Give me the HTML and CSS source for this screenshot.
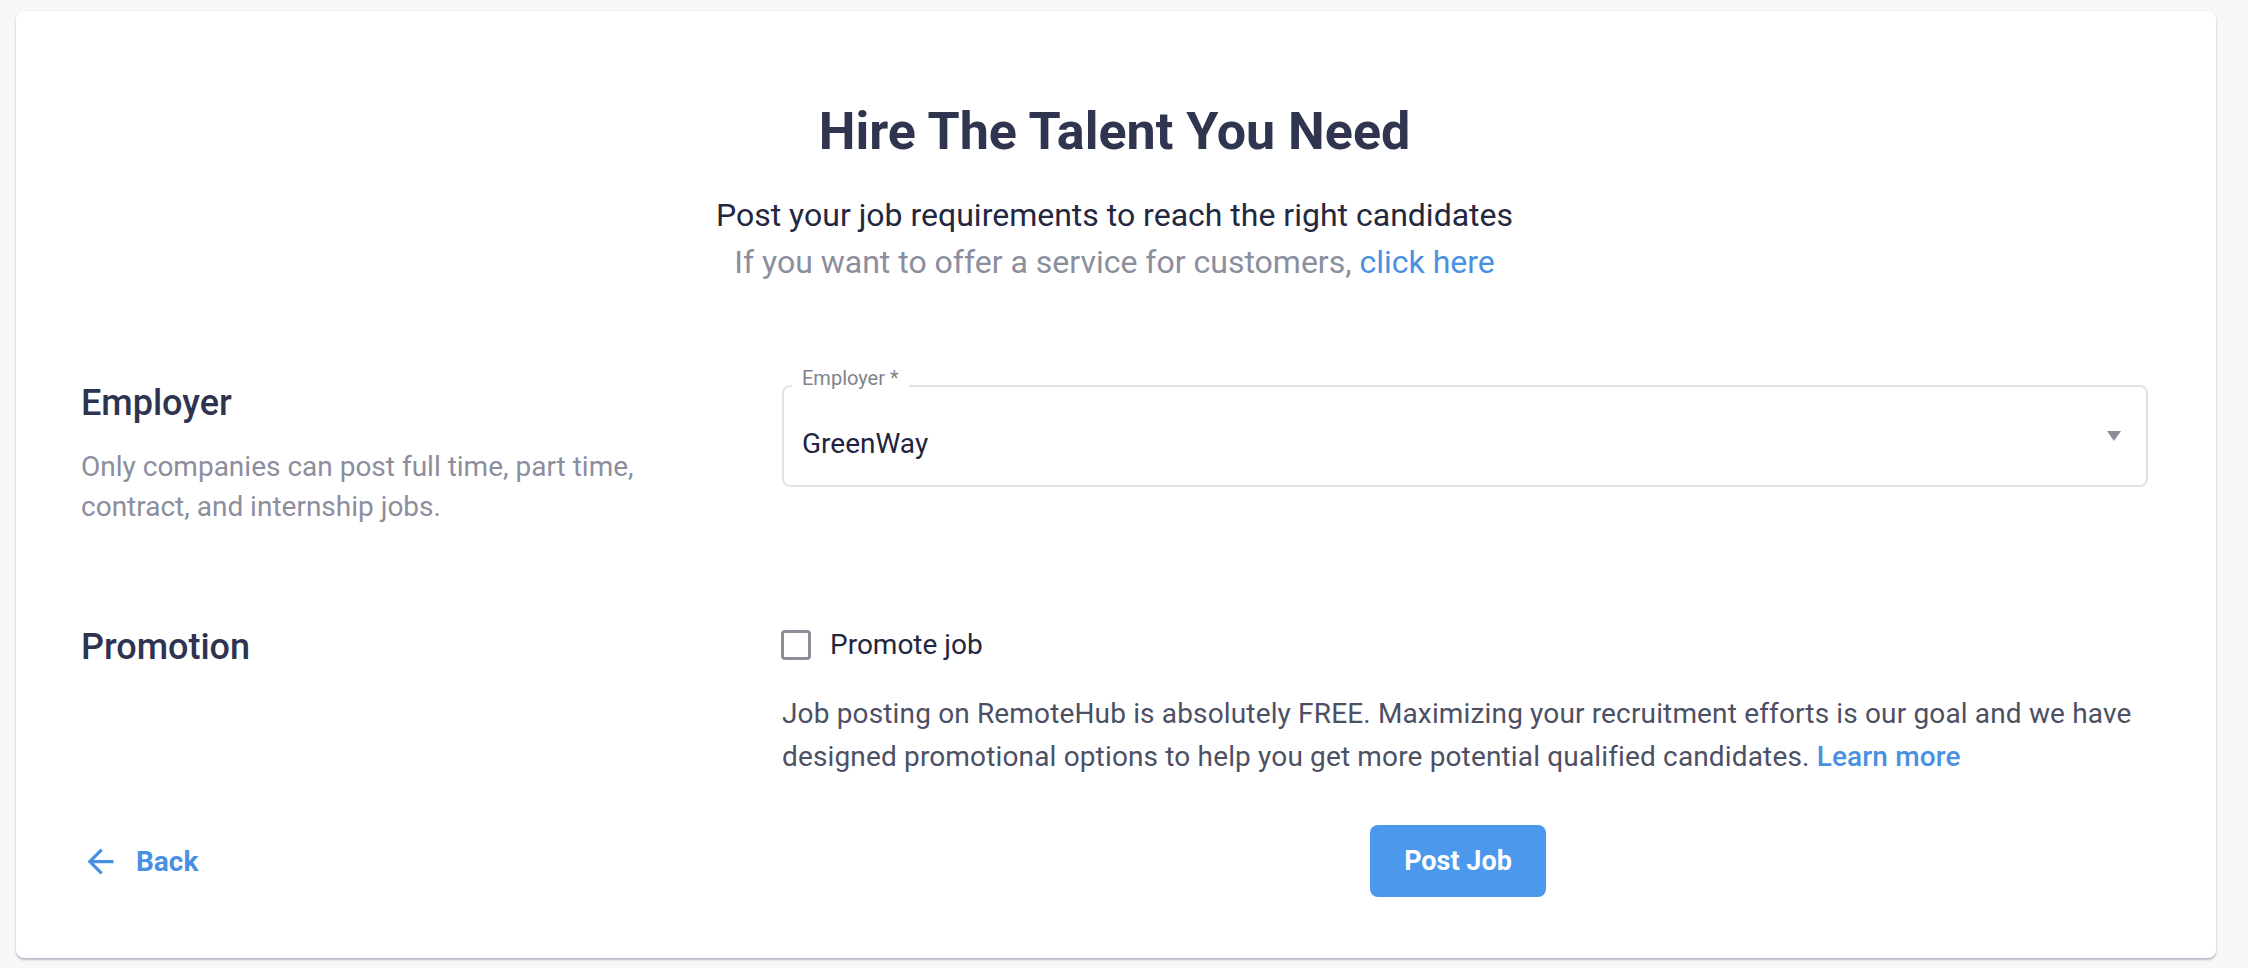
FILE: index.html
```html
<!DOCTYPE html>
<html>
  <head>
    <meta charset="utf-8" />
    <title>Post a Job</title>
    <link rel="stylesheet" href="styles.css">
  </head>
  <body>
    <div class="card">
      <header class="intro">
        <h1>Hire The Talent You Need</h1>
        <p class="intro-lead">Post your job requirements to reach the right candidates</p>
        <p class="intro-note">If you want to offer a service for customers, <a href="#">click here</a></p>
      </header>

      <section class="row row-employer">
        <div class="row-info">
          <h2>Employer</h2>
          <p>Only companies can post full time, part time, contract, and internship jobs.</p>
        </div>
        <div class="row-field">
          <div class="select">
            <span class="select-label">Employer *</span>
            <span class="select-value">GreenWay</span>
            <span class="select-caret"></span>
          </div>
        </div>
      </section>

      <section class="row row-promotion">
        <div class="row-info">
          <h2>Promotion</h2>
        </div>
        <div class="row-field">
          <label class="check">
            <span class="check-box"></span>
            <span>Promote job</span>
          </label>
          <p class="promo-text">
            Job posting on RemoteHub is absolutely FREE. Maximizing your recruitment efforts is our goal and we have
            designed promotional options to help you get more potential qualified candidates. <a href="#">Learn more</a>
          </p>
        </div>
      </section>

      <footer class="row actions">
        <a class="back" href="#">
          <svg width="39" height="39" viewBox="0 0 24 24"><path fill="currentColor" d="M20 11H7.83l5.59-5.59L12 4l-8 8 8 8 1.41-1.41L7.83 13H20v-2z"/></svg>
          <span>Back</span>
        </a>
        <div class="actions-main">
          <button class="btn-primary" type="button">Post Job</button>
        </div>
      </footer>
    </div>
  </body>
</html>
```

FILE: styles.css
```css
body {
  margin: 0;
  background-color: #f8f8f8;
  font-family: Roboto, "Liberation Sans", sans-serif;
  color: #2e3350;
}

a {
  color: #4a90e2;
  text-decoration: none;
}

.card {
  width: 2200px;
  box-sizing: border-box;
  margin: 11px 0 8px 16px;
  padding: 90px 68px 61px 65px;
  background-color: #fff;
  border-radius: 8px;
  box-shadow: 0 2px 2px rgba(70, 80, 110, 0.35), 0 0 3px rgba(0, 0, 0, 0.06);
}

/* header */
.intro {
  text-align: center;
}

.intro h1 {
  margin: 0;
  font-size: 52px;
  line-height: 62px;
  font-weight: 700;
  color: #30354f;
}

.intro p {
  margin: 0;
  font-size: 32px;
  line-height: 47px;
}

.intro-lead {
  margin-top: 29px !important;
  color: #23283f;
}

.intro-note {
  color: #8b8e9c;
}

/* form rows */
.row {
  display: grid;
  grid-template-columns: 683px 1fr;
  column-gap: 18px;
}

.row-employer {
  margin-top: 96px;
}

.row-promotion {
  margin-top: 99px;
}

.row-info h2 {
  margin: 0;
  font-size: 36px;
  line-height: 43px;
  font-weight: 500;
  color: #2e3350;
}

.row-info p {
  max-width: 600px;
  margin: 22px 0 0;
  font-size: 28px;
  line-height: 40px;
  color: #8b8e9c;
}

.row-field {
  padding-top: 3px;
}

/* select */
.select {
  position: relative;
  display: flex;
  align-items: center;
  height: 102px;
  box-sizing: border-box;
  padding: 0 25px 0 18px;
  border: 2px solid #e1e2e7;
  border-radius: 8px;
}

.select-label {
  position: absolute;
  top: -20px;
  left: 8px;
  padding: 0 10px;
  background-color: #fff;
  font-size: 20px;
  line-height: 22px;
  color: #80838f;
}

.select-value {
  padding-top: 16px;
  font-size: 28px;
  line-height: 32px;
  color: #1f2440;
}

.select-caret {
  margin-left: auto;
  width: 0;
  height: 0;
  border-left: 7.5px solid transparent;
  border-right: 7.5px solid transparent;
  border-top: 10px solid #8b8e9a;
}

/* checkbox */
.check {
  display: flex;
  align-items: center;
  gap: 19px;
  font-size: 28px;
  line-height: 31px;
  color: #23283f;
}

.check-box {
  width: 30px;
  height: 30px;
  box-sizing: border-box;
  margin-left: -1px;
  border: 3px solid #8b8e9a;
  border-radius: 4px;
}

.promo-text {
  margin: 32px -14px 0 0;
  font-size: 28px;
  line-height: 43px;
  letter-spacing: 0.15px;
  color: #4c5064;
}

.promo-text a {
  font-weight: 500;
}

/* actions */
.actions {
  margin-top: 47px;
  align-items: center;
}

.back {
  display: flex;
  align-items: center;
  gap: 16px;
  font-size: 28px;
  font-weight: 700;
}

.back svg {
  display: block;
}

.actions-main {
  display: flex;
  justify-content: center;
  padding-right: 14px;
}

.btn-primary {
  width: 176px;
  height: 72px;
  border: none;
  border-radius: 8px;
  background-color: #4b98ec;
  color: #fff;
  font-family: Roboto, "Liberation Sans", sans-serif;
  font-size: 27px;
  font-weight: 700;
}
```
